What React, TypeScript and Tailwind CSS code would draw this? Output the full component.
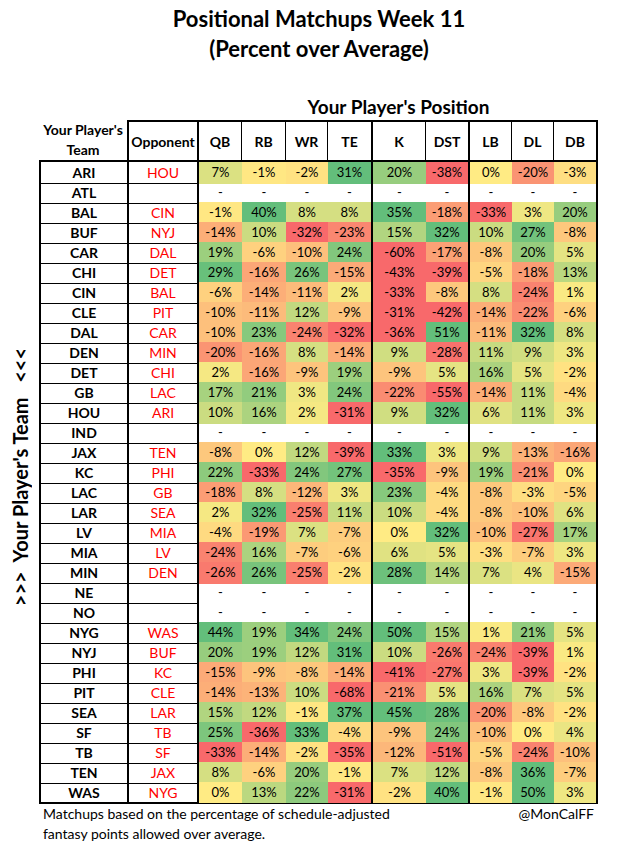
import React from 'react';

type Row = [string, string, number[] | null];

const rows: Row[] = [
  ['ARI', 'HOU', [7, -1, -2, 31, 20, -38, 0, -20, -3]],
  ['ATL', '', null],
  ['BAL', 'CIN', [-1, 40, 8, 8, 35, -18, -33, 3, 20]],
  ['BUF', 'NYJ', [-14, 10, -32, -23, 15, 32, 10, 27, -8]],
  ['CAR', 'DAL', [19, -6, -10, 24, -60, -17, -8, 20, 5]],
  ['CHI', 'DET', [29, -16, 26, -15, -43, -39, -5, -18, 13]],
  ['CIN', 'BAL', [-6, -14, -11, 2, -33, -8, 8, -24, 1]],
  ['CLE', 'PIT', [-10, -11, 12, -9, -31, -42, -14, -22, -6]],
  ['DAL', 'CAR', [-10, 23, -24, -32, -36, 51, -11, 32, 8]],
  ['DEN', 'MIN', [-20, -16, 8, -14, 9, -28, 11, 9, 3]],
  ['DET', 'CHI', [2, -16, -9, 19, -9, 5, 16, 5, -2]],
  ['GB', 'LAC', [17, 21, 3, 24, -22, -55, -14, 11, -4]],
  ['HOU', 'ARI', [10, 16, 2, -31, 9, 32, 6, 11, 3]],
  ['IND', '', null],
  ['JAX', 'TEN', [-8, 0, 12, -39, 33, 3, 9, -13, -16]],
  ['KC', 'PHI', [22, -33, 24, 27, -35, -9, 19, -21, 0]],
  ['LAC', 'GB', [-18, 8, -12, 3, 23, -4, -8, -3, -5]],
  ['LAR', 'SEA', [2, 32, -25, 11, 10, -4, -8, -10, 6]],
  ['LV', 'MIA', [-4, -19, 7, -7, 0, 32, -10, -27, 17]],
  ['MIA', 'LV', [-24, 16, -7, -6, 6, 5, -3, -7, 3]],
  ['MIN', 'DEN', [-26, 26, -25, -2, 28, 14, 7, 4, -15]],
  ['NE', '', null],
  ['NO', '', null],
  ['NYG', 'WAS', [44, 19, 34, 24, 50, 15, 1, 21, 5]],
  ['NYJ', 'BUF', [20, 19, 12, 31, 10, -26, -24, -39, 1]],
  ['PHI', 'KC', [-15, -9, -8, -14, -41, -27, 3, -39, -2]],
  ['PIT', 'CLE', [-14, -13, 10, -68, -21, 5, 16, 7, 5]],
  ['SEA', 'LAR', [15, 12, -1, 37, 45, 28, -20, -8, -2]],
  ['SF', 'TB', [25, -36, 33, -4, -9, 24, -10, 0, 4]],
  ['TB', 'SF', [-33, -14, -2, -35, -12, -51, -5, -24, -10]],
  ['TEN', 'JAX', [8, -6, 20, -1, 7, 12, -8, 36, -7]],
  ['WAS', 'NYG', [0, 13, 22, -31, -2, 40, -1, 50, 3]],
];

const positions = ['QB', 'RB', 'WR', 'TE', 'K', 'DST', 'LB', 'DL', 'DB'];

// header cell borders, one per position column
const headCls = [
  'border-t-2 border-r',
  'border-t-2 border-r',
  'border-t-2 border-r',
  'border-t-2',
  'border-t-2 border-l-2 border-r',
  'border-t-2',
  'border-t-2 border-l-2 border-r',
  'border-t-2 border-r',
  'border-t-2 border-r-2',
];

// thick group separators in the body
const bodyCls = ['', '', '', '', 'border-l-2', '', 'border-l-2', '', ''];

const RED = [248, 105, 107];
const YEL = [255, 235, 132];
const GRN = [99, 190, 123];

// one scale for the whole sheet, clamped at +/-30%
const LOW = -30;
const HIGH = 30;

function mix(a: number[], b: number[], t: number) {
  const c = a.map((v, i) => Math.round(v + (b[i] - v) * t));
  return `rgb(${c[0]}, ${c[1]}, ${c[2]})`;
}

function cellColor(v: number) {
  const x = Math.max(LOW, Math.min(HIGH, v));
  if (x <= 0) return mix(YEL, RED, x / LOW);
  return mix(YEL, GRN, x / HIGH);
}

const cols = 'grid grid-cols-[88px_70px_43px_44px_42px_43px_55px_42px_44px_42px_42px]';

export default function App() {
  return (
    <div className="w-[638px] h-[844px] bg-white text-black font-['Lato','Liberation_Sans',sans-serif] overflow-hidden">
      {/* Title */}
      <div className="pt-[4px] text-center font-bold text-[22px] leading-[30px]">
        <div>Positional Matchups Week 11</div>
        <div>(Percent over Average)</div>
      </div>

      <div className="ml-[39px] w-[559px] mt-[33px]">
        <div className="pl-[160px] text-center font-bold text-[19px] leading-[20px]">Your Player's Position</div>

        {/* Column headers */}
        <div className="mt-[3px] grid grid-cols-[88px_72px_43px_44px_42px_43px_55px_42px_44px_42px_44px] h-[40px] text-[14px] font-bold">
          <div className="flex items-center justify-center text-center leading-[20px]">
            Your Player's
            <br />
            Team
          </div>
          <div className="flex items-center justify-center border-t-2 border-l-2 border-r-2 border-black">Opponent</div>
          {positions.map((p, i) => (
            <div key={p} className={`flex items-center justify-center border-black ${headCls[i]}`}>
              {p}
            </div>
          ))}
        </div>
      </div>

      <div className="flex">
        {/* Side label */}
        <div className="w-[39px] flex items-center justify-center pb-[10px]">
          <div className="[writing-mode:vertical-rl] rotate-180 font-bold text-[20px] leading-[22px] whitespace-pre">
            {'>>>  Your Player\'s Team   <<<'}
          </div>
        </div>

        {/* Body */}
        <div className="w-[559px] border-2 border-black text-[13px]">
          {rows.map(([team, opp, vals], r) => {
            const last = r === rows.length - 1;
            return (
              <div key={team} className={`${cols} h-[20px]`}>
                <div
                  className={`flex items-center justify-center font-bold text-[14px] border-r-2 border-black ${last ? '' : 'border-b'}`}
                >
                  {team}
                </div>
                <div
                  className={`flex items-center justify-center text-[#ff0000] text-[14px] border-r-2 border-black ${last ? '' : 'border-b'}`}
                >
                  {opp}
                </div>
                {positions.map((p, c) => (
                  <div
                    key={p}
                    className={`flex items-center justify-center border-black ${bodyCls[c]}`}
                    style={vals ? { backgroundColor: cellColor(vals[c]) } : undefined}
                  >
                    {vals ? `${vals[c]}%` : '-'}
                  </div>
                ))}
              </div>
            );
          })}
        </div>
      </div>

      {/* Footnote */}
      <div className="ml-[43px] w-[551px] flex justify-between text-[14px] leading-[20px]">
        <div>
          Matchups based on the percentage of schedule-adjusted
          <br />
          fantasy points allowed over average.
        </div>
        <div>@MonCalFF</div>
      </div>
    </div>
  );
}
